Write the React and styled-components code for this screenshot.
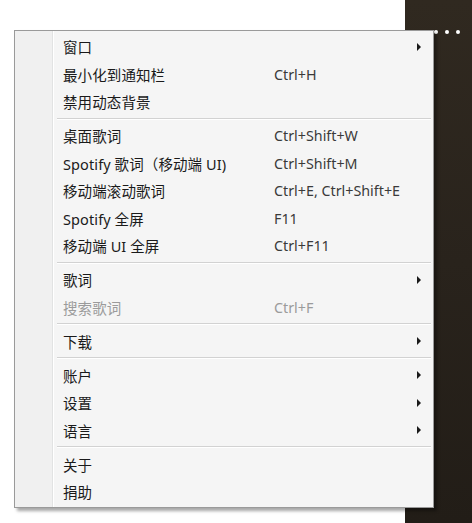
import React from 'react';
import styled, { createGlobalStyle } from 'styled-components';

const GlobalStyle = createGlobalStyle`
  html, body {
    margin: 0;
    padding: 0;
    background: #ffffff;
  }
  body {
    font-family: "Noto Sans", "Noto Sans CJK SC", sans-serif;
  }
`;

const Page = styled.div`
  position: relative;
  display: flex;
  width: 472px;
  height: 523px;
  overflow: hidden;
  background: #ffffff;
`;

const Content = styled.div`
  flex: 1;
`;

const SidePanel = styled.div`
  width: 67px;
  background: linear-gradient(180deg, #302920 0%, #29231c 50%, #221d17 100%);
  display: flex;
  justify-content: flex-end;
  gap: 7px;
  padding: 30px 12px 0 0;
  box-sizing: border-box;
`;

const Dot = styled.span`
  width: 4px;
  height: 4px;
  border-radius: 50%;
  background: #ffffff;
`;

const Menu = styled.div`
  position: absolute;
  left: 14px;
  top: 30px;
  width: 418px;
  padding: 2px 0 1px;
  border: 1px solid #9a9a9a;
  background: linear-gradient(
    90deg,
    #f0f0f0 0,
    #f0f0f0 37px,
    #e2e3e3 37px,
    #e2e3e3 38px,
    #ffffff 38px,
    #ffffff 39px,
    #f5f5f5 39px
  );
  box-shadow: 3px 3px 3px rgba(0, 0, 0, 0.35);
`;

const Item = styled.div`
  display: grid;
  grid-template-columns: 211px 1fr 16px;
  align-items: center;
  height: 27.5px;
  padding: 0 12px 0 48px;
  font-size: 14.5px;
  color: ${({ disabled }) => (disabled ? '#9b9b9b' : '#1a1a1a')};
`;

const Label = styled.span`
  white-space: nowrap;
  letter-spacing: 0.1px;
`;

const Shortcut = styled.span`
  white-space: nowrap;
  font-size: 14.3px;
  color: ${({ disabled }) => (disabled ? '#9b9b9b' : '#3a3a3a')};
`;

const Arrow = styled.span`
  justify-self: end;
  width: 0;
  height: 0;
  border-top: 4px solid transparent;
  border-bottom: 4px solid transparent;
  border-left: 4px solid #1a1a1a;
`;

const Separator = styled.div`
  height: 6.5px;
  display: flex;
  align-items: center;
  padding: 0 2px 0 42px;

  &::before {
    content: '';
    flex: 1;
    height: 1px;
    background: #d2d2d2;
    border-bottom: 1px solid #ffffff;
  }
`;

const groups = [
  [
    { label: '窗口', sub: true },
    { label: '最小化到通知栏', key: 'Ctrl+H' },
    { label: '禁用动态背景' },
  ],
  [
    { label: '桌面歌词', key: 'Ctrl+Shift+W' },
    { label: 'Spotify 歌词（移动端 UI)', key: 'Ctrl+Shift+M' },
    { label: '移动端滚动歌词', key: 'Ctrl+E, Ctrl+Shift+E' },
    { label: 'Spotify 全屏', key: 'F11' },
    { label: '移动端 UI 全屏', key: 'Ctrl+F11' },
  ],
  [
    { label: '歌词', sub: true },
    { label: '搜索歌词', key: 'Ctrl+F', disabled: true },
  ],
  [{ label: '下载', sub: true }],
  [
    { label: '账户', sub: true },
    { label: '设置', sub: true },
    { label: '语言', sub: true },
  ],
  [{ label: '关于' }, { label: '捐助' }],
];

const MenuItem = ({ label, shortcut, sub, disabled }) => (
  <Item disabled={disabled}>
    <Label>{label}</Label>
    <Shortcut disabled={disabled}>{shortcut}</Shortcut>
    {sub ? <Arrow /> : <span />}
  </Item>
);

export default function App() {
  return (
    <>
      <GlobalStyle />
      <Page>
        <Content />
        <SidePanel>
          <Dot />
          <Dot />
          <Dot />
        </SidePanel>
        <Menu>
          {groups.map((group, i) => (
            <React.Fragment key={i}>
              {i > 0 && <Separator />}
              {group.map((it) => (
                <MenuItem key={it.label} label={it.label} shortcut={it.key} sub={it.sub} disabled={it.disabled} />
              ))}
            </React.Fragment>
          ))}
        </Menu>
      </Page>
    </>
  );
}
